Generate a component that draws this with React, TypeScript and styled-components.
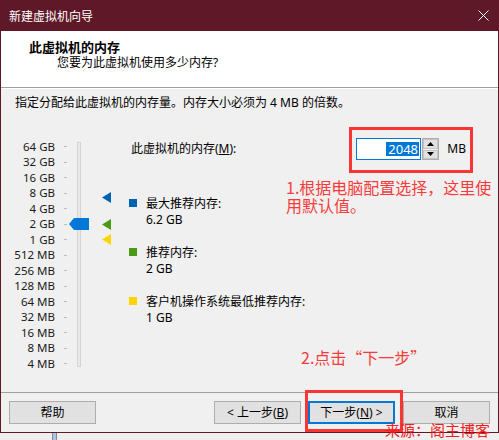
import styled, { createGlobalStyle } from 'styled-components';

const GlobalStyle = createGlobalStyle`
  html, body {
    margin: 0;
    padding: 0;
    background: #efefef;
  }
  body {
    font-family: "Noto Sans", "Noto Sans CJK SC", sans-serif;
    font-size: 12px;
    color: #000;
  }
`;

const MAROON = '#5f1828';
const RED = '#f73b3b';
const ROW = 15.5;

const scale = [
  '64 GB', '32 GB', '16 GB', '8 GB', '4 GB', '2 GB', '1 GB',
  '512 MB', '256 MB', '128 MB', '64 MB', '32 MB', '16 MB', '8 MB', '4 MB',
];

// index on the scale (can be fractional) -> marker colour
const markers = [
  { pos: 3.3, color: '#0063b1' },
  { pos: 5, color: '#4b9a13' },
  { pos: 6, color: '#ffd400' },
];

const legend = [
  { color: '#0063b1', title: '最大推荐内存:', value: '6.2 GB' },
  { color: '#4b9a13', title: '推荐内存:', value: '2 GB' },
  { color: '#ffd400', title: '客户机操作系统最低推荐内存:', value: '1 GB' },
];

const rowCenter = (pos: number) => 1 + pos * ROW + ROW / 2;

const App = () => {
  return (
    <Page>
      <GlobalStyle />
      <Window>
        <TitleBar>
          <span>新建虚拟机向导</span>
          <svg width="11" height="11" viewBox="0 0 11 11">
            <path d="M0.5 0.5 L10.5 10.5 M10.5 0.5 L0.5 10.5" stroke="#fff" strokeWidth="1" />
          </svg>
        </TitleBar>
        <Frame>
          <Header>
            <HeaderTitle>此虚拟机的内存</HeaderTitle>
            <HeaderSub>您要为此虚拟机使用多少内存?</HeaderSub>
          </Header>
          <Body>
            <Desc>指定分配给此虚拟机的内存量。内存大小必须为 4 MB 的倍数。</Desc>
            <Main>
              <Scale>
                <Labels>
                  {scale.map((s) => (
                    <ScaleRow key={s}>
                      <ScaleLabel>{s}</ScaleLabel>
                      <Tick />
                    </ScaleRow>
                  ))}
                </Labels>
                <Track />
                <Thumb style={{ top: rowCenter(5) - 6 }}>
                  <svg width="20" height="12" viewBox="0 0 20 12">
                    <path d="M0 6 L5 0 H20 V12 H5 Z" fill="#0078d7" />
                  </svg>
                </Thumb>
                {markers.map((m) => (
                  <Marker key={m.color} style={{ top: rowCenter(m.pos) - 5.5 }}>
                    <svg width="9" height="11" viewBox="0 0 9 11">
                      <path d="M0 5.5 L9 0 V11 Z" fill={m.color} />
                    </svg>
                  </Marker>
                ))}
              </Scale>
              <Content>
                <MemoryRow>
                  <MemLabel>
                    此虚拟机的内存(<u>M</u>):
                  </MemLabel>
                  <InputGroup>
                    <NumberBox>
                      <Selected>2048</Selected>
                    </NumberBox>
                    <Spinner>
                      <SpinButton>
                        <svg width="7" height="4" viewBox="0 0 7 4">
                          <path d="M0 4 L3.5 0 L7 4 Z" fill="#000" />
                        </svg>
                      </SpinButton>
                      <SpinButton>
                        <svg width="7" height="4" viewBox="0 0 7 4">
                          <path d="M0 0 L7 0 L3.5 4 Z" fill="#000" />
                        </svg>
                      </SpinButton>
                    </Spinner>
                    <Unit>MB</Unit>
                    <Highlight $top={-11} $left={-7} $right={-7} $bottom={-13} />
                  </InputGroup>
                </MemoryRow>
                <LegendList>
                  {legend.map((l) => (
                    <LegendItem key={l.title}>
                      <Swatch $color={l.color} />
                      <div>
                        <div>{l.title}</div>
                        <div>{l.value}</div>
                      </div>
                    </LegendItem>
                  ))}
                </LegendList>
              </Content>
            </Main>
          </Body>
          <Footer>
            <Button>帮助</Button>
            <ButtonGroup>
              <Button>
                &lt; 上一步(<u>B</u>)
              </Button>
              <NextWrap>
                <Button $primary>
                  下一步(<u>N</u>) &gt;
                </Button>
                <Highlight $top={-11} $left={-3} $right={-8} $bottom={-8} />
              </NextWrap>
              <Button>取消</Button>
            </ButtonGroup>
          </Footer>
        </Frame>
      </Window>
      <Behind>
        <BehindBar />
      </Behind>
      <Note $top={178} $left={286}>
        1.根据电脑配置选择，这里使
        <br />
        用默认值。
      </Note>
      <Note $top={348} $left={301}>
        2.点击“下一步”
      </Note>
      <Source>来源：阁主博客</Source>
    </Page>
  );
};

const Page = styled.div`
  position: relative;
  width: 499px;
  height: 440px;
  overflow: hidden;
  background: #efefef;
`;

const Window = styled.div`
  display: flex;
  flex-direction: column;
  width: 499px;
`;

const TitleBar = styled.div`
  height: 31px;
  background: ${MAROON};
  color: #fff;
  display: flex;
  align-items: center;
  justify-content: space-between;
  padding: 0 10px 0 9px;
  line-height: 16px;
  box-sizing: border-box;
  font-family: "Noto Sans CJK SC", sans-serif;
`;

const Frame = styled.div`
  border: 1px solid ${MAROON};
  border-top: none;
  display: flex;
  flex-direction: column;
`;

const Header = styled.div`
  height: 48px;
  background: #fff;
  border-bottom: 1px solid #a0a0a0;
  padding: 8px 0 0 28px;
  line-height: 16px;
`;

const HeaderTitle = styled.div`
  font-family: "Noto Sans CJK SC", sans-serif;
  font-weight: 700;
  font-size: 13px;
`;

const HeaderSub = styled.div`
  margin-left: 28px;
`;

const Body = styled.div`
  height: 304px;
  background: #f0f0f0;
  border-top: 1px solid #fff;
  box-sizing: border-box;
  padding-top: 6px;
`;

const Desc = styled.div`
  line-height: 16px;
  padding-left: 14px;
`;

const Main = styled.div`
  display: flex;
  margin-top: 27px;
`;

const Scale = styled.div`
  position: relative;
  width: 128px;
  flex: none;
  display: flex;
  padding-top: 1px;
`;

const Labels = styled.div`
  display: flex;
  flex-direction: column;
`;

const ScaleRow = styled.div`
  height: ${ROW}px;
  display: flex;
  align-items: center;
`;

const ScaleLabel = styled.span`
  width: 54px;
  text-align: right;
  font-size: 11.5px;
  line-height: 14px;
  color: #1a1a1a;
`;

const Tick = styled.span`
  width: 3px;
  height: 1px;
  background: #bdbdbd;
  margin-left: 9px;
`;

const Track = styled.div`
  width: 2px;
  height: 223px;
  margin: 3px 0 0 10px;
  background: #e9e9e9;
  border: 1px solid #d4d4d4;
`;

const Thumb = styled.div`
  position: absolute;
  left: 68px;
  height: 12px;
  line-height: 0;
`;

const Marker = styled.div`
  position: absolute;
  left: 101px;
  line-height: 0;
`;

const Content = styled.div`
  display: flex;
  flex-direction: column;
`;

const MemoryRow = styled.div`
  display: flex;
  align-items: center;
  height: 22px;
`;

const MemLabel = styled.div`
  width: 225px;
  padding-left: 2px;
  line-height: 16px;
  u {
    text-underline-offset: 1px;
  }
`;

const InputGroup = styled.div`
  position: relative;
  display: flex;
  align-items: center;
  width: 110px;
  height: 22px;
`;

const NumberBox = styled.div`
  width: 65px;
  height: 20px;
  border: 1px solid #0078d7;
  background: #fff;
  display: flex;
  align-items: center;
  justify-content: flex-end;
  padding-right: 1px;
  box-sizing: content-box;
`;

const Selected = styled.span`
  background: #0078d7;
  color: #fff;
  font-size: 13px;
  line-height: 14px;
  padding: 0 1px 0 2px;
`;

const Spinner = styled.div`
  display: flex;
  flex-direction: column;
  margin-left: 1px;
  width: 18px;
  height: 22px;
  border: 1px solid #adadad;
  box-sizing: border-box;
  gap: 1px;
  background: #f0f0f0;
`;

const SpinButton = styled.div`
  flex: 1;
  display: flex;
  align-items: center;
  justify-content: center;
  background: #e1e1e1;
  border: 1px solid #c4c4c4;
  line-height: 0;
`;

const Unit = styled.span`
  margin-left: 8px;
  line-height: 16px;
`;

const Highlight = styled.div<{ $top: number; $left: number; $right: number; $bottom: number }>`
  position: absolute;
  top: ${(p) => p.$top}px;
  left: ${(p) => p.$left}px;
  right: ${(p) => p.$right}px;
  bottom: ${(p) => p.$bottom}px;
  border: 3px solid #fb3434;
  pointer-events: none;
`;

const LegendList = styled.div`
  display: flex;
  flex-direction: column;
  align-items: flex-start;
  gap: 18px;
  margin-top: 36px;
  line-height: 15.5px;
`;

const LegendItem = styled.div`
  display: flex;
  gap: 9px;
`;

const Swatch = styled.span<{ $color: string }>`
  width: 8px;
  height: 8px;
  margin-top: 3px;
  background: ${(p) => p.$color};
  flex: none;
`;

const Footer = styled.div`
  display: flex;
  justify-content: space-between;
  border-top: 1px solid #a0a0a0;
  padding: 8px 8px;
  background: #f0f0f0;
`;

const ButtonGroup = styled.div`
  display: flex;
  gap: 8px;
`;

const NextWrap = styled.div`
  position: relative;
  display: flex;
  margin-left: -1px;
`;

const Button = styled.div<{ $primary?: boolean }>`
  width: 87px;
  height: 23px;
  box-sizing: border-box;
  display: flex;
  align-items: center;
  justify-content: center;
  background: #e1e1e1;
  border: ${(p) => (p.$primary ? '2px solid #0078d7' : '1px solid #adadad')};
  line-height: 16px;
  u {
    text-underline-offset: 1px;
  }
`;

const Behind = styled.div`
  height: 7px;
  display: flex;
`;

const BehindBar = styled.div`
  width: 3px;
  height: 7px;
  margin-left: 52px;
  border: 1px solid #8a8a8a;
  border-top: none;
  background: #a9c6e4;
`;

const Note = styled.div<{ $top: number; $left: number }>`
  position: absolute;
  top: ${(p) => p.$top}px;
  left: ${(p) => p.$left}px;
  color: ${RED};
  font-family: "Noto Sans CJK SC", sans-serif;
  font-size: 16px;
  line-height: 18px;
  white-space: nowrap;
`;

const Source = styled.div`
  position: absolute;
  top: 421px;
  left: 385px;
  color: #f21d1d;
  font-family: "Noto Sans CJK SC", sans-serif;
  font-size: 15px;
  line-height: 17px;
  white-space: nowrap;
`;

export default App;
